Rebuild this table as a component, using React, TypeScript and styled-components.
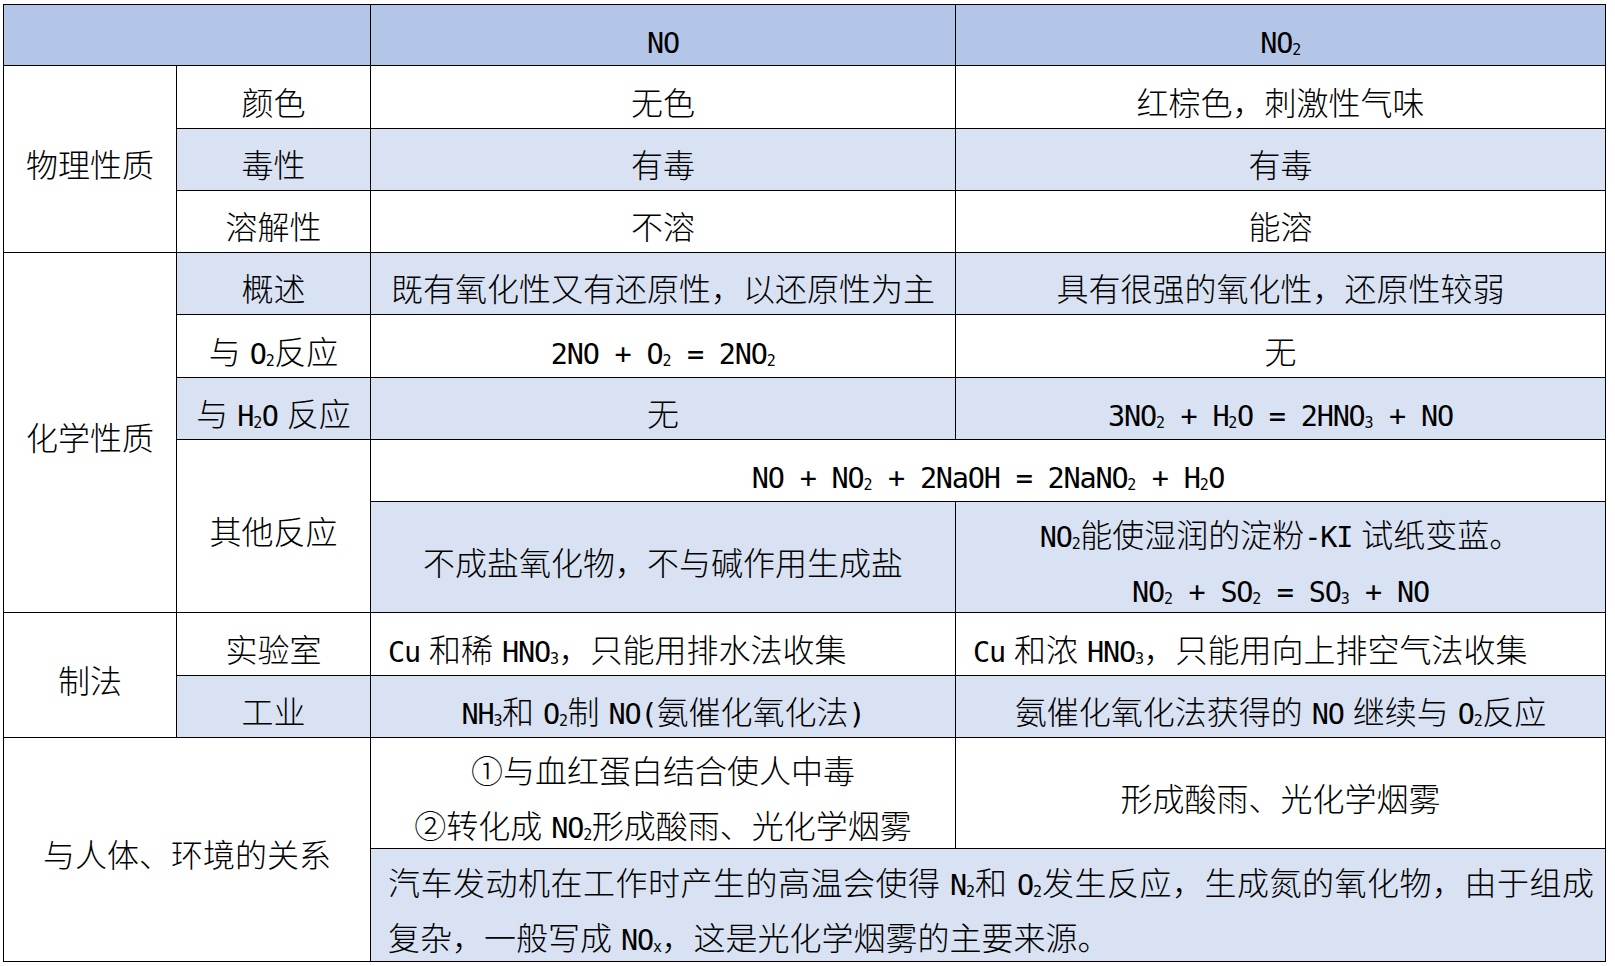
import React from 'react';
import styled, { createGlobalStyle } from 'styled-components';

const GlobalStyle = createGlobalStyle`
  html, body { margin: 0; padding: 0; background: #ffffff; }
  body {
    font-family: "Noto Sans CJK SC", "Noto Sans Mono CJK SC", sans-serif;
    font-weight: 300;
    color: #000000;
  }
`;

const Page = styled.div`
  padding: 4px 0 0 3px;
`;

const Grid = styled.div`
  display: grid;
  grid-template-columns: 173px 194px 585px 650px;
  grid-template-rows: 61px 63px 62px 62px 62px 63px 62px 62px 111px 63px 62px 111px 113px;
  width: max-content;
  border-top: 1px solid #000;
  border-left: 1px solid #000;
`;

type Tone = 'head' | 'light' | 'white';
type Align = 'center' | 'left' | 'justify';

const tones: Record<Tone, string> = {
  head: '#b4c6e7',
  light: '#d9e2f3',
  white: '#ffffff',
};

const Cell = styled.div<{ $col: string; $row: string; $tone: Tone; $align: Align }>`
  grid-column: ${(p) => p.$col};
  grid-row: ${(p) => p.$row};
  background: ${(p) => tones[p.$tone]};
  border-right: 1px solid #000;
  border-bottom: 1px solid #000;
  box-sizing: border-box;
  display: flex;
  align-items: center;
  justify-content: ${(p) => (p.$align === 'center' ? 'center' : 'flex-start')};
  padding: ${(p) => (p.$align === 'center' ? '8px 0 0 0' : '8px 11px 0 17px')};
  min-width: 0;
`;

const Content = styled.div<{ $align: Align }>`
  font-size: 32px;
  line-height: 55px;
  white-space: nowrap;
  text-align: ${(p) => (p.$align === 'center' ? 'center' : 'left')};
  width: ${(p) => (p.$align === 'justify' ? '100%' : 'auto')};
`;

const Line = styled.div<{ $spread?: boolean }>`
  height: 55px;
  text-align: ${(p) => (p.$spread ? 'justify' : 'inherit')};
  text-align-last: ${(p) => (p.$spread ? 'justify' : 'auto')};
`;

const Lat = styled.span`
  font-family: "DejaVu Sans Mono", "Liberation Mono", monospace;
  font-weight: 400;
  font-size: 28.5px;
  letter-spacing: -1.2px;
  line-height: 1;
`;

const Gap = styled.span`
  font-family: "DejaVu Sans Mono", monospace;
  font-size: 15px;
  line-height: 1;
`;

const Sub = styled.span`
  font-family: "DejaVu Sans Mono", "Liberation Mono", monospace;
  font-weight: 400;
  font-size: 15px;
  letter-spacing: -0.5px;
  line-height: 1;
  vertical-align: -2px;
`;

function rich(s: string): React.ReactNode[] {
  const out: React.ReactNode[] = [];
  const ascii = /[\x20-\x7e]/;
  let i = 0;
  let k = 0;
  while (i < s.length) {
    const ch = s[i];
    if (ch === '_') {
      out.push(<Sub key={k++}>{s[i + 1]}</Sub>);
      i += 2;
      continue;
    }
    let j = i;
    if (ascii.test(ch)) {
      while (j < s.length && s[j] !== '_' && ascii.test(s[j])) j++;
      let run = s.slice(i, j);
      const prevCjk = i > 0 && !ascii.test(s[i - 1]);
      const nextCjk = j < s.length && !ascii.test(s[j]);
      let lead = false;
      let trail = false;
      if (prevCjk && run.startsWith(' ')) {
        lead = true;
        run = run.slice(1);
      }
      if (nextCjk && run.endsWith(' ')) {
        trail = true;
        run = run.slice(0, -1);
      }
      if (lead) out.push(<Gap key={k++}> </Gap>);
      if (run) out.push(<Lat key={k++}>{run}</Lat>);
      if (trail) out.push(<Gap key={k++}> </Gap>);
    } else {
      while (j < s.length && !ascii.test(s[j])) j++;
      out.push(<React.Fragment key={k++}>{s.slice(i, j)}</React.Fragment>);
    }
    i = j;
  }
  return out;
}

type Spec = { col: string; row: string; tone: Tone; lines: string[]; align?: Align };

const cells: Spec[] = [
  { col: '1 / 3', row: '1', tone: 'head', lines: [] },
  { col: '3', row: '1', tone: 'head', lines: ['NO'] },
  { col: '4', row: '1', tone: 'head', lines: ['NO_2'] },

  { col: '1', row: '2 / 5', tone: 'white', lines: ['物理性质'] },
  { col: '2', row: '2', tone: 'white', lines: ['颜色'] },
  { col: '3', row: '2', tone: 'white', lines: ['无色'] },
  { col: '4', row: '2', tone: 'white', lines: ['红棕色，刺激性气味'] },
  { col: '2', row: '3', tone: 'light', lines: ['毒性'] },
  { col: '3', row: '3', tone: 'light', lines: ['有毒'] },
  { col: '4', row: '3', tone: 'light', lines: ['有毒'] },
  { col: '2', row: '4', tone: 'white', lines: ['溶解性'] },
  { col: '3', row: '4', tone: 'white', lines: ['不溶'] },
  { col: '4', row: '4', tone: 'white', lines: ['能溶'] },

  { col: '1', row: '5 / 10', tone: 'white', lines: ['化学性质'] },
  { col: '2', row: '5', tone: 'light', lines: ['概述'] },
  { col: '3', row: '5', tone: 'light', lines: ['既有氧化性又有还原性，以还原性为主'] },
  { col: '4', row: '5', tone: 'light', lines: ['具有很强的氧化性，还原性较弱'] },
  { col: '2', row: '6', tone: 'white', lines: ['与 O_2反应'] },
  { col: '3', row: '6', tone: 'white', lines: ['2NO + O_2 = 2NO_2'] },
  { col: '4', row: '6', tone: 'white', lines: ['无'] },
  { col: '2', row: '7', tone: 'light', lines: ['与 H_2O 反应'] },
  { col: '3', row: '7', tone: 'light', lines: ['无'] },
  { col: '4', row: '7', tone: 'light', lines: ['3NO_2 + H_2O = 2HNO_3 + NO'] },
  { col: '2', row: '8 / 10', tone: 'white', lines: ['其他反应'] },
  { col: '3 / 5', row: '8', tone: 'white', lines: ['NO + NO_2 + 2NaOH = 2NaNO_2 + H_2O'] },
  { col: '3', row: '9', tone: 'light', lines: ['不成盐氧化物，不与碱作用生成盐'] },
  {
    col: '4',
    row: '9',
    tone: 'light',
    lines: ['NO_2能使湿润的淀粉-KI 试纸变蓝。', 'NO_2 + SO_2 = SO_3 + NO'],
  },

  { col: '1', row: '10 / 12', tone: 'white', lines: ['制法'] },
  { col: '2', row: '10', tone: 'white', lines: ['实验室'] },
  { col: '3', row: '10', tone: 'white', align: 'left', lines: ['Cu 和稀 HNO_3，只能用排水法收集'] },
  { col: '4', row: '10', tone: 'white', align: 'left', lines: ['Cu 和浓 HNO_3，只能用向上排空气法收集'] },
  { col: '2', row: '11', tone: 'light', lines: ['工业'] },
  { col: '3', row: '11', tone: 'light', lines: ['NH_3和 O_2制 NO(氨催化氧化法)'] },
  { col: '4', row: '11', tone: 'light', lines: ['氨催化氧化法获得的 NO 继续与 O_2反应'] },

  { col: '1 / 3', row: '12 / 14', tone: 'white', lines: ['与人体、环境的关系'] },
  {
    col: '3',
    row: '12',
    tone: 'white',
    lines: ['①与血红蛋白结合使人中毒', '②转化成 NO_2形成酸雨、光化学烟雾'],
  },
  { col: '4', row: '12', tone: 'white', lines: ['形成酸雨、光化学烟雾'] },
  {
    col: '3 / 5',
    row: '13',
    tone: 'light',
    align: 'justify',
    lines: [
      '汽车发动机在工作时产生的高温会使得 N_2和 O_2发生反应，生成氮的氧化物，由于组成',
      '复杂，一般写成 NO_x，这是光化学烟雾的主要来源。',
    ],
  },
];

export default function App() {
  return (
    <>
      <GlobalStyle />
      <Page>
        <Grid>
          {cells.map((c, idx) => {
            const align: Align = c.align ?? 'center';
            return (
              <Cell key={idx} $col={c.col} $row={c.row} $tone={c.tone} $align={align}>
                {c.lines.length > 0 && (
                  <Content $align={align}>
                    {c.lines.map((l, li) => (
                      <Line key={li} $spread={align === 'justify' && li < c.lines.length - 1}>
                        {rich(l)}
                      </Line>
                    ))}
                  </Content>
                )}
              </Cell>
            );
          })}
        </Grid>
      </Page>
    </>
  );
}
